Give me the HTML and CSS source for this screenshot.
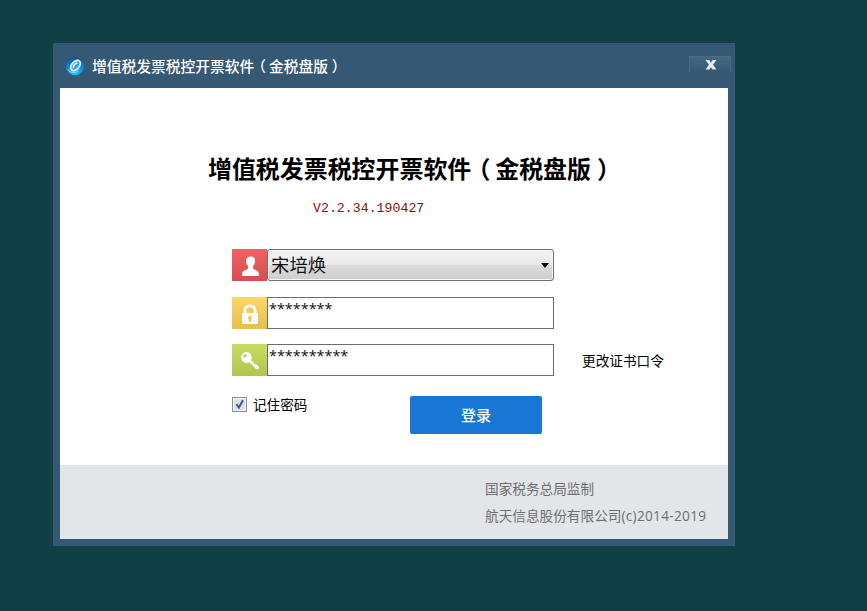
FILE: index.html
```html
<!DOCTYPE html>
<html lang="zh-CN">
<head>
<meta charset="utf-8">
<title>增值税发票税控开票软件（金税盘版）</title>
<link rel="stylesheet" href="styles.css">
</head>
<body>
<main class="window">
  <header class="titlebar">
    <svg class="logo" viewBox="0 0 20 20">
      <defs><radialGradient id="ball" cx=".5" cy=".9" r=".9"><stop offset="0" stop-color="#18c8ff"/><stop offset=".6" stop-color="#1080dc"/><stop offset="1" stop-color="#164a90"/></radialGradient></defs>
      <circle cx="10" cy="10" r="9.3" fill="url(#ball)"/>
      <ellipse cx="10.500" cy="9.500" rx="6" ry="3.700" transform="rotate(-48 10.500 9.500)" fill="#2e9be6" stroke="#eefaff" stroke-width="1.700"/>
      <path d="M12.500 7c-2.500.4-4 2.500-4.300 5" fill="none" stroke="#eefaff" stroke-width="1.500"/>
      <path d="M3 13.500c2 3.500 7 4 10.500 1.500" fill="none" stroke="#8be0ff" stroke-width="1"/>
    </svg>
    <span class="caption">增值税发票税控开票软件<span class="start">（</span>金税盘版<span class="end">）</span></span>
    <button class="close" aria-label="关闭"><svg viewBox="0 0 12 10"><path d="M.5 0h3.700L6 2.500 7.800 0h3.700L8 4.800 11.500 9.500H7.700L6 7.200 4.300 9.500H.5L4 4.800z" fill="#e6ebef"/></svg></button>
  </header>
  <section class="content">
    <div class="login">
      <h1>增值税发票税控开票软件<span class="start">（</span>金税盘版<span class="end">）</span></h1>
      <p class="version">V2.2.34.190427</p>
      <form class="form">
        <div class="row">
          <span class="icon user"><svg viewBox="0 0 34 32"><path d="M18 7.500c3 0 4.400 2 4 5-.2 2.200-1 3.500-1.900 4.500v2.400c.8 1.400 5.900 2 5.900 5.400V27H9v-2.200c0-3.400 5.300-4 6.100-5.400V17c-1-1-1.800-2.300-2-4.500-.4-3 1.500-5 4.900-5z"/></svg></span>
          <div class="select"><span>宋培焕</span><i class="arrow"></i></div>
        </div>
        <div class="row">
          <span class="icon lock"><svg viewBox="0 0 34 32"><path fill-rule="evenodd" d="M9 16h1.500v-2.500c0-8 13-8 13 0V16H25v9.500q0 1.500-1.500 1.500h-13Q9 27 9 25.500zM13.300 16h7.400v-2.500c0-4.300-7.400-4.300-7.400 0zM17 18.800a2 2 0 0 0-1 3.700V25h2v-2.500a2 2 0 0 0-1-3.700z"/></svg></span>
          <div class="field">********</div>
        </div>
        <div class="row">
          <span class="icon key"><svg viewBox="0 0 34 32"><path fill-rule="evenodd" d="M13.500 8a5.500 5.500 0 1 0 2.800 10.300L17.500 19l5.200 5.700c2 1.700 4.200-.5 2.800-2.500L23 20.200l-1.800.3-.2-2-2.300-1.500-.6-1A5.500 5.500 0 0 0 13.500 8zM12 10a1.700 1.700 0 1 1 0 3.400A1.700 1.700 0 0 1 12 10z"/></svg></span>
          <div class="field">**********</div>
          <a class="change">更改证书口令</a>
        </div>
        <div class="actions">
          <label class="remember"><span class="check"><svg viewBox="0 0 15 15"><path d="M4 7l2.800 4 4.700-8.500" fill="none" stroke="#405c9c" stroke-width="2.400"/></svg></span>记住密码</label>
          <button type="button" class="submit">登录</button>
        </div>
      </form>
    </div>
    <footer class="footer">
      <p>国家税务总局监制</p>
      <p>航天信息股份有限公司<span class="latin">(c)2014-2019</span></p>
    </footer>
  </section>
</main>
</body>
</html>
```

FILE: styles.css
```css
* { box-sizing: border-box; }
body {
  margin: 0;
  height: 611px;
  padding: 43px 0 0 53px;
  background: #104045;
  overflow: hidden;
  font-family: "Noto Sans CJK SC", sans-serif;
}
h1, p { margin: 0; }
button { border: 0; padding: 0; font-family: inherit; }
.window {
  width: 682px;
  height: 503px;
  padding: 0 7px 7px;
  background: #355874;
}
.titlebar {
  height: 45px;
  display: flex;
  align-items: center;
  padding: 0 0 0 5px;
}
.logo { width: 20px; height: 20px; margin-right: 7px; }
.caption {
  flex: 1;
  color: #fff;
  font-size: 14.75px;
  font-weight: 500;
  line-height: 20px;
  white-space: nowrap;
  padding-top: 1px;
}
.start { margin-left: -.2em; padding-right: .2em; }
.end { padding-left: .25em; }
.close {
  width: 42px;
  height: 16px;
  margin: -4px -3px 0 0;
  display: flex;
  justify-content: center;
  align-items: center;
  border: solid #4c6c85;
  border-width: 1px 1px 0;
  background: linear-gradient(#46677f, #355874);
}
.close svg { width: 12px; height: 10px; margin: 1px 0 0 1px; }
.content {
  height: 451px;
  display: flex;
  flex-direction: column;
  background: #fff;
}
.login { flex: 1; padding: 63px 0 0 148px; }
h1 {
  font-size: 23.95px;
  line-height: 34px;
  font-weight: 700;
  color: #000;
  white-space: nowrap;
}
.version {
  margin: 16px 0 0 105px;
  font: 13.25px/16px "Liberation Mono", monospace;
  color: #980808;
}
.form { padding: 32px 0 0 24px; }
.row { display: flex; height: 32px; margin-bottom: 16px; }
.row + .row + .row { margin: -1px 0 0; }
.icon { width: 35px; height: 32px; }
.icon svg { display: block; width: 34px; height: 32px; margin-left: 1px; fill: #fff; }
.user { background: linear-gradient(#ee6464, #d84e50); }
.lock { background: linear-gradient(#fbd668, #e6be50); }
.key { background: linear-gradient(#c8dc64, #b0c64c); }
.select, .field { width: 287px; height: 32px; color: #111; }
.select {
  display: flex;
  align-items: center;
  justify-content: space-between;
  padding: 0 4px 0 3px;
  border: 1px solid #707070;
  border-radius: 3px;
  box-shadow: inset 0 0 0 1px #f8f8f8;
  background: linear-gradient(#f2f2f2 0, #e9e9e9 49%, #dcdcdc 50%, #cdcdcd 100%);
  font-size: 18.4px;
  line-height: 28px;
}
.select span { height: 30px; }
.arrow {
  border: solid transparent;
  border-width: 5px 4.5px 0;
  border-top-color: #000;
}
.field {
  border: 1px solid #6c6c6c;
  padding: 0 0 0 1px;
  font: 14.4px/22px "Open Sans", sans-serif;
  background: #fff;
}
.change {
  margin-left: 28px;
  color: #000;
  font-size: 13.65px;
  line-height: 32px;
  white-space: nowrap;
}
.actions {
  display: flex;
  justify-content: space-between;
  align-items: flex-start;
  width: 310px;
  margin-top: 20px;
}
.remember {
  display: flex;
  align-items: center;
  gap: 6px;
  height: 16px;
  font-size: 13.6px;
  color: #000;
}
.check {
  width: 15px;
  height: 15px;
  border: 1px solid #8a8f94;
  background: #dde1e6;
  box-shadow: inset 0 0 0 1px #f4f4f4;
}
.check svg { display: block; width: 13px; height: 13px; }
.submit {
  width: 132px;
  height: 38px;
  padding-bottom: 2px;
  border-radius: 2px;
  background: #1976d5;
  color: #fff;
  font-size: 15px;
  font-weight: 500;
}
.footer {
  height: 74px;
  padding: 10px 0 0 425px;
  background: #e2e6e9;
  color: #6e6e6e;
  font-size: 13.65px;
  line-height: 27px;
  white-space: nowrap;
}
.latin { font-family: "Open Sans", sans-serif; letter-spacing: .3px; }
```
